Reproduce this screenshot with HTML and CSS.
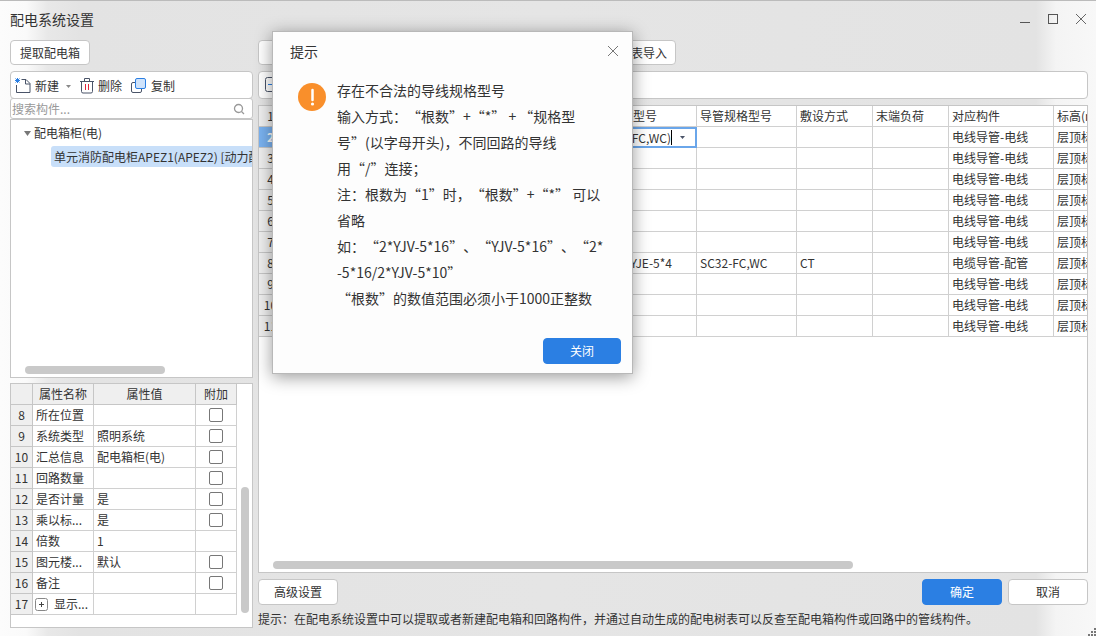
FILE: index.html
```html
<!DOCTYPE html>
<html lang="zh-CN">
<head>
<meta charset="utf-8">
<title>配电系统设置</title>
<link rel="stylesheet" href="styles.css">
</head>
<body>
<div class="window">
  <header class="titlebar">
    <h1>配电系统设置</h1>
    <div class="controls">
      <button class="icon-btn" aria-label="最小化"><svg width="12" height="12" viewBox="0 0 12 12"><path d="M1 9.500h10" stroke="#555" fill="none"/></svg></button>
      <button class="icon-btn" aria-label="最大化"><svg width="12" height="12" viewBox="0 0 12 12"><rect x="1.500" y="1.500" width="9" height="9" stroke="#555" fill="none"/></svg></button>
      <button class="icon-btn" aria-label="关闭窗口"><svg width="12" height="12" viewBox="0 0 12 12"><path d="M1 1l10 10M11 1L1 11" stroke="#666" fill="none"/></svg></button>
    </div>
  </header>

  <main class="layout">
    <div class="actions"><button class="btn">提取配电箱</button></div>
    <div class="actions split">
      <button class="btn" aria-label="系统图"></button>
      <button class="btn import">表导入</button>
    </div>

    <section class="left">
      <div class="toolbar">
        <button class="tool">
          <svg width="16" height="16" viewBox="0 0 16 16" fill="none"><path d="M6.500 1.500H11l4 4v9H1.500V7" stroke="#4a5468" stroke-linejoin="round"/><path d="M10.500 1.500v4.500H15" stroke="#4a5468"/><path d="M.5 .5l4 4M4.500 .5l-4 4M2.500 0v5M0 2.500h5" stroke="#2b7fe3"/></svg>
          新建 <svg class="drop" width="5" height="3" viewBox="0 0 5 3"><path d="M0 0h5L2.500 3z" fill="#888"/></svg>
        </button>
        <button class="tool">
          <svg width="14" height="16" viewBox="0 0 14 16" fill="none"><path d="M0 3.500h14M4.500 3V.5h5V3M1.500 4v9.500q0 1.500 1.500 1.500h8q1.500 0 1.500-1.500V4" stroke="#4a5468"/><path d="M5.500 6v6M8.500 6v6" stroke="#e0263c"/></svg>
          删除
        </button>
        <button class="tool">
          <svg width="16" height="16" viewBox="0 0 16 16" fill="none"><rect x=".5" y="4.500" width="10" height="10" rx="1.500" stroke="#4a5468"/><rect x="4.500" y=".5" width="10" height="10" rx="1.500" fill="#cfe3fb" stroke="#2b7fe3"/></svg>
          复制
        </button>
      </div>
      <div class="search">
        <input type="text" placeholder="搜索构件..." aria-label="搜索构件">
        <svg width="12" height="12" viewBox="0 0 12 12" fill="none" stroke="#999" stroke-width="1.300"><circle cx="5.500" cy="5.500" r="4"/><path d="M8.500 8.500l2.500 2.500"/></svg>
      </div>
      <div class="panel tree">
        <ul>
          <li class="group"><svg width="7" height="5" viewBox="0 0 7 5"><path d="M0 0h7L3.500 5z" fill="#777"/></svg>配电箱柜(电)</li>
          <li class="leaf">单元消防配电柜APEZ1(APEZ2) [动力配</li>
        </ul>
        <div class="hbar"></div>
      </div>
      <div class="panel props">
        <table>
          <colgroup><col class="p-no"><col class="p-name"><col class="p-value"><col class="p-add"></colgroup>
          <thead><tr><th></th><th>属性名称</th><th>属性值</th><th>附加</th></tr></thead>
          <tbody>
            <tr><th>8</th><td>所在位置</td><td></td><td class="c"><input type="checkbox" aria-label="附加 所在位置"></td></tr>
            <tr><th>9</th><td>系统类型</td><td>照明系统</td><td class="c"><input type="checkbox" aria-label="附加 系统类型"></td></tr>
            <tr><th>10</th><td>汇总信息</td><td>配电箱柜(电)</td><td class="c"><input type="checkbox" aria-label="附加 汇总信息"></td></tr>
            <tr><th>11</th><td>回路数量</td><td></td><td class="c"><input type="checkbox" aria-label="附加 回路数量"></td></tr>
            <tr><th>12</th><td>是否计量</td><td>是</td><td class="c"><input type="checkbox" aria-label="附加 是否计量"></td></tr>
            <tr><th>13</th><td>乘以标...</td><td>是</td><td class="c"><input type="checkbox" aria-label="附加 乘以标准间"></td></tr>
            <tr><th>14</th><td>倍数</td><td>1</td><td></td></tr>
            <tr><th>15</th><td>图元楼...</td><td>默认</td><td class="c"><input type="checkbox" aria-label="附加 图元楼层"></td></tr>
            <tr><th>16</th><td>备注</td><td></td><td class="c"><input type="checkbox" aria-label="附加 备注"></td></tr>
            <tr><th>17</th><td class="more"><div class="expand"><svg width="13" height="13" viewBox="0 0 13 13" fill="none"><rect x=".5" y=".5" width="12" height="12" rx="2" stroke="#888"/><path d="M4 6.500h5M6.500 4v5" stroke="#444"/></svg>显示...</div></td><td></td><td></td></tr>
          </tbody>
        </table>
        <div class="vtrack"><div class="vbar"></div></div>
      </div>
    </section>

    <section class="right">
      <div class="toolbar">
        <button class="tool" aria-label="收起"><svg width="16" height="16" viewBox="0 0 16 16" fill="none"><rect x=".5" y=".5" width="15" height="14" rx="2" stroke="#4a5468"/><path d="M3 7.500h10" stroke="#2b7fe3"/></svg></button>
      </div>
      <div class="panel grid">
        <div class="grid-view">
          <table>
            <colgroup><col class="g-no"><col class="g-rest"><col class="g-wire"><col class="g-tube"><col class="g-lay"><col class="g-load"><col class="g-part"><col class="g-height"></colgroup>
            <tbody>
              <tr><th>1</th><td></td><td>导线规格型号</td><td>导管规格型号</td><td>敷设方式</td><td>末端负荷</td><td>对应构件</td><td>标高(m)</td></tr>
              <tr class="current"><th>2</th><td></td><td class="edit"><div class="combo"><input type="text" value="FC,WC)" aria-label="导线规格型号"><svg width="5" height="3" viewBox="0 0 5 3"><path d="M0 0h5L2.500 3z" fill="#4a5468"/></svg></div></td><td></td><td></td><td></td><td>电线导管-电线</td><td>层顶标高</td></tr>
              <tr><th>3</th><td></td><td></td><td></td><td></td><td></td><td>电线导管-电线</td><td>层顶标高</td></tr>
              <tr><th>4</th><td></td><td></td><td></td><td></td><td></td><td>电线导管-电线</td><td>层顶标高</td></tr>
              <tr><th>5</th><td></td><td></td><td></td><td></td><td></td><td>电线导管-电线</td><td>层顶标高</td></tr>
              <tr><th>6</th><td></td><td></td><td></td><td></td><td></td><td>电线导管-电线</td><td>层顶标高</td></tr>
              <tr><th>7</th><td></td><td></td><td></td><td></td><td></td><td>电线导管-电线</td><td>层顶标高</td></tr>
              <tr><th>8</th><td></td><td class="r">YJE-5*4</td><td>SC32-FC,WC</td><td>CT</td><td></td><td>电缆导管-配管</td><td>层顶标高</td></tr>
              <tr><th>9</th><td></td><td></td><td></td><td></td><td></td><td>电线导管-电线</td><td>层顶标高</td></tr>
              <tr><th>10</th><td></td><td></td><td></td><td></td><td></td><td>电线导管-电线</td><td>层顶标高</td></tr>
              <tr><th>11</th><td></td><td></td><td></td><td></td><td></td><td>电线导管-电线</td><td>层顶标高</td></tr>
            </tbody>
          </table>
        </div>
        <div class="hbar wide"></div>
      </div>
      <div class="footer">
        <button class="btn">高级设置</button>
        <span class="spacer"></span>
        <button class="btn primary">确定</button>
        <button class="btn">取消</button>
      </div>
      <p class="hint">提示：在配电系统设置中可以提取或者新建配电箱和回路构件，并通过自动生成的配电树表可以反查至配电箱构件或回路中的管线构件。</p>
    </section>
  </main>

  <svg class="grip" width="8" height="8" viewBox="0 0 8 8" fill="#777"><path d="M6 0h2v2H6zM3 3h2v2H3zM6 3h2v2H6zM0 6h2v2H0zM3 6h2v2H3zM6 6h2v2H6z"/></svg>

  <div class="dialog" role="dialog" aria-labelledby="dlg-title">
    <div class="dialog-head">
      <h2 id="dlg-title">提示</h2>
      <button class="icon-btn" aria-label="关闭提示"><svg width="12" height="12" viewBox="0 0 12 12"><path d="M1 1l10 10M11 1L1 11" stroke="#777" fill="none"/></svg></button>
    </div>
    <div class="dialog-body">
      <svg width="28" height="28" viewBox="0 0 28 28"><circle cx="14" cy="14" r="14" fill="#f98f2b"/><path d="M14.500 7v10" stroke="#fff" stroke-width="2.500" stroke-linecap="round"/><circle cx="14.500" cy="21" r="1.600" fill="#fff"/></svg>
      <p>存在不合法的导线规格型号<br>输入方式：“根数”+“*” + “规格型<br>号”(以字母开头)，不同回路的导线<br>用“/”连接；<br>注：根数为“1”时，“根数”+“*” 可以<br>省略<br>如：“2*YJV-5*16”、“YJV-5*16”、“2*<br>-5*16/2*YJV-5*10”<br>“根数”的数值范围必须小于1000正整数</p>
    </div>
    <div class="dialog-foot"><button class="btn primary">关闭</button></div>
  </div>
</div>
</body>
</html>
```

FILE: styles.css
```css
* { box-sizing: border-box; }

body {
  margin: 0;
  font: 12px/20px "Noto Sans CJK SC", sans-serif;
  color: #333;
  text-spacing-trim: space-all;
}

h1, h2, p, ul { margin: 0; padding: 0; font-weight: 400; }
button, input { font: inherit; color: inherit; }
button { padding: 0; }
svg { display: block; flex: none; }

.window {
  position: relative;
  display: flex;
  flex-direction: column;
  min-height: 100vh;
  padding: 0 8px 8px 10px;
  border-top: 1px solid #bbb;
  overflow: hidden;
  background: linear-gradient(90deg, #fcfcfc 0, #fafafa 26px, #e8e8e8 48px, #e3e3e3 80px, #e5e5e5 50%, #e3e3e3 calc(100% - 60px), #f4f4f4 calc(100% - 40px), #f8f8f8 100%);
}

.titlebar {
  display: flex;
  align-items: center;
  justify-content: space-between;
  height: 39px;
  padding-bottom: 3px;
}
.titlebar h1 { font-size: 14px; }
.controls { display: flex; gap: 16px; padding-right: 1px; }
.icon-btn { border: 0; background: none; }

.layout {
  flex: 1;
  display: grid;
  grid-template-columns: 243px minmax(0, 1fr);
  grid-template-rows: auto 1fr;
  gap: 6px 5px;
}
.actions { display: flex; }
.split { width: 418px; justify-content: space-between; }

.btn {
  min-width: 80px;
  height: 25px;
  border: 1px solid #c6c6c6;
  border-radius: 4px;
  background: #fff;
}
.btn.import { min-width: 96px; padding-right: 8px; text-align: right; }
.btn.primary { border-color: #2b7fe3; background: #2b7fe3; color: #fff; }

.left, .right { display: flex; flex-direction: column; min-width: 0; }

.toolbar {
  display: flex;
  align-items: center;
  gap: 9px;
  height: 28px;
  padding: 2px 4px 0;
  border: 1px solid #c6c6c6;
  border-radius: 4px;
  background: #fff;
}
.right .toolbar { padding: 0 6px; }
.tool {
  display: flex;
  align-items: center;
  gap: 4px;
  border: 0;
  background: none;
}
.tool .drop { margin-left: 3px; }

.search {
  display: flex;
  align-items: center;
  height: 21px;
  margin: -1px 0 0;
  padding: 1px 7px 0 1px;
  border: 1px solid #c6c6c6;
  border-radius: 3px;
  background: #fff;
}
.search input {
  flex: 1;
  min-width: 0;
  height: 18px;
  padding: 0;
  border: 0;
  outline: 0;
  background: none;
}
.search input::placeholder { color: #999; }

.panel { border: 1px solid #c6c6c6; background: #fff; overflow: hidden; }

.tree { flex: 1; display: flex; flex-direction: column; justify-content: space-between; }
.tree ul { list-style: none; padding-top: 3px; }
.group { display: flex; align-items: center; gap: 3px; padding-left: 13px; }
.leaf {
  margin: 3px 0 0 40px;
  padding-left: 3px;
  border-radius: 3px 0 0 3px;
  background: #c8dff9;
  line-height: 21px;
  white-space: nowrap;
  overflow: hidden;
}
.hbar {
  width: 140px;
  height: 8px;
  margin: 0 0 3px 14px;
  border-radius: 4px;
  background: #c9c9c9;
}
.hbar.wide { width: 70%; }

table { border-collapse: separate; border-spacing: 0; table-layout: fixed; }
th, td {
  height: 21px;
  padding: 0 3px;
  border-right: 1px solid #d0d0d0;
  border-bottom: 1px solid #d0d0d0;
  font-weight: 400;
  text-align: left;
  white-space: nowrap;
  overflow: hidden;
}
th { background: #efefef; border-color: #c6c6c6; text-align: center; padding: 0; }
.r { text-align: right; padding-right: 24px; }

.props { display: flex; margin-top: 5px; padding-bottom: 12px; }
.props table { width: 226px; }
.p-no { width: 22px; }
.p-name { width: 61px; }
.p-value { width: 102px; }
.p-add { width: 41px; }
.props td.c { padding: 0; }
.props td.more { padding: 0 2px; }
.c input {
  appearance: none;
  display: block;
  width: 14px;
  height: 14px;
  margin: 0 auto;
  border: 1px solid #777;
  border-radius: 2px;
  background: #fff;
}
.expand { display: flex; align-items: center; gap: 6px; }
.vtrack { flex: 1; display: flex; flex-direction: column; justify-content: flex-end; padding: 0 3px 2px 4px; }
.vbar { height: 126px; border-radius: 4px; background: #c9c9c9; }

.grid { flex: 1; display: flex; flex-direction: column; justify-content: space-between; margin-top: 6px; }
.grid table { width: 866px; }
.g-no { width: 24px; }
.g-rest { width: 299px; }
.g-wire { width: 115px; }
.g-tube { width: 100px; }
.g-lay { width: 76px; }
.g-load { width: 76px; }
.g-part { width: 105px; }
.g-height { width: 71px; }
.current th { background: #7ab2f0; color: #fff; font-weight: 700; }
td.edit { padding: 0; border: 0; }
.combo {
  display: flex;
  align-items: center;
  gap: 8px;
  height: 21px;
  padding-right: 10px;
  border: 2px solid #6aa6ea;
}
.combo input {
  flex: 1;
  min-width: 0;
  height: 15px;
  padding: 0;
  border: 0;
  border-right: 1px solid #000;
  outline: 0;
  text-align: right;
}

.footer { display: flex; gap: 6px; margin-top: 6px; }
.footer .btn { height: 26px; }
.spacer { flex: 1; }
.hint { margin-top: 5px; line-height: 18px; white-space: nowrap; }

.grip { position: absolute; right: 0; bottom: 0; }

.dialog {
  position: absolute;
  top: 30px;
  left: 272px;
  width: 361px;
  border: 1px solid #b8b8b8;
  background: #fdfdfd;
  box-shadow: 0 3px 16px rgba(0, 0, 0, .4);
}
.dialog-head {
  display: flex;
  align-items: center;
  justify-content: space-between;
  height: 37px;
  padding: 0 13px 0 17px;
}
.dialog-head h2 { font-size: 14px; }
.dialog-body { display: flex; gap: 11px; padding: 8px 26px 0 25px; }
.dialog-body svg { margin-top: 6px; }
.dialog-body p {
  flex: 1;
  min-width: 0;
  overflow: hidden;
  font-size: 14px;
  line-height: 26px;
  white-space: nowrap;
}
.dialog-foot { display: flex; justify-content: flex-end; padding: 27px 11px 9px; }
.dialog-foot .btn { min-width: 78px; height: 26px; }
```
